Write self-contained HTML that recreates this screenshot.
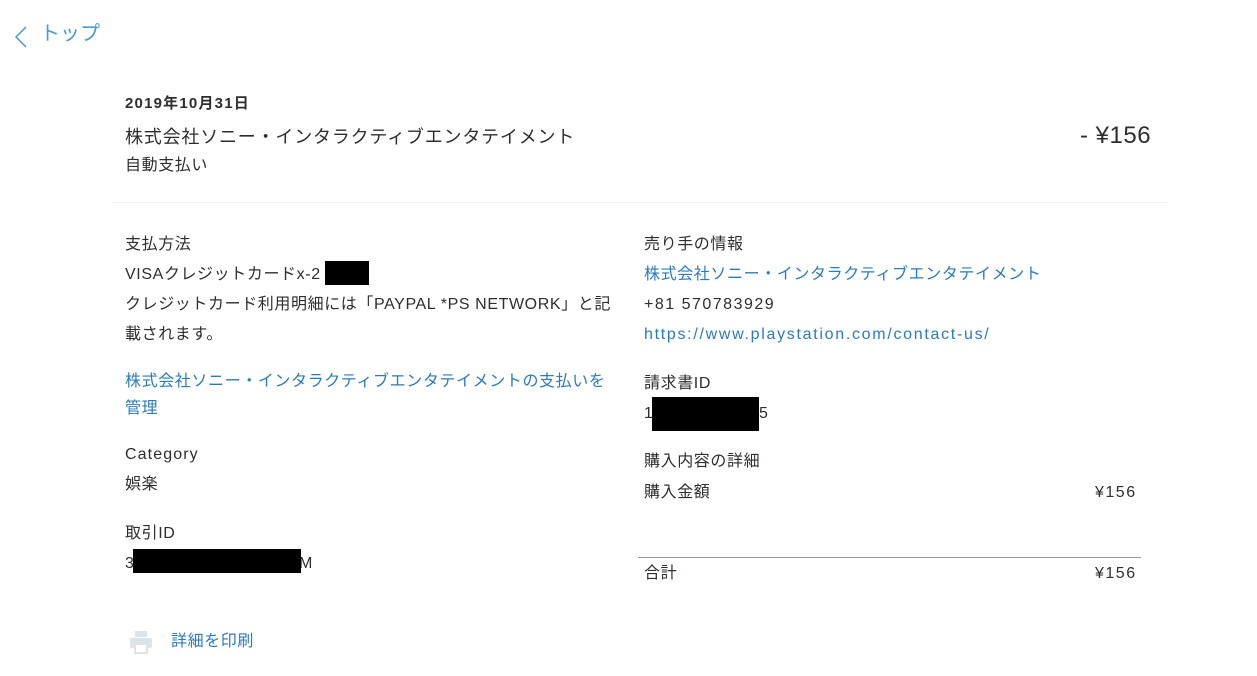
<!DOCTYPE html><html><head><meta charset="utf-8"><style>
body{margin:0;width:1257px;height:676px;background:#fff;font-family:"Liberation Sans","Noto Sans CJK JP",sans-serif;color:#2c2e2f;position:relative;overflow:hidden}
.a{position:absolute;white-space:nowrap;font-size:16px;line-height:20px;letter-spacing:.6px}
.l{letter-spacing:1.5px}
.b{color:#2a7bbd}
.k{position:absolute;background:#000}
</style></head><body>
<svg class="a" style="left:11px;top:24px" width="22" height="26" viewBox="0 0 22 26"><path d="M15 3 L5 13 L15 23" fill="none" stroke="#4a9ad6" stroke-width="1.5"/></svg>
<div class="a b" style="left:40px;top:22px;font-size:20px;line-height:24px;color:#4a9ad6;letter-spacing:0">トップ</div>
<div class="a" style="left:125px;top:94px;font-weight:bold;font-size:15px;letter-spacing:1.2px">2019年10月31日</div>
<div class="a" style="left:125px;top:125px;font-size:18px;line-height:24px;letter-spacing:.8px">株式会社ソニー・インタラクティブエンタテイメント</div>
<div class="a" style="left:1080px;top:122px;font-size:24px;line-height:28px;letter-spacing:.5px">- ¥156</div>
<div class="a" style="left:125px;top:156px">自動支払い</div>
<div style="position:absolute;left:112px;top:202px;width:1055px;height:1px;background:#eef0f2"></div>
<div class="a" style="left:125px;top:235px">支払方法</div>
<div class="a" style="left:125px;top:265px">VISAクレジットカードx-2</div>
<div class="k" style="left:325px;top:261px;width:44px;height:24px"></div>
<div class="a" style="left:125px;top:295px">クレジットカード利用明細には「PAYPAL *PS NETWORK」と記</div>
<div class="a" style="left:125px;top:325px">載されます。</div>
<div class="a b" style="left:125px;top:372px">株式会社ソニー・インタラクティブエンタテイメントの支払いを</div>
<div class="a b" style="left:125px;top:399px">管理</div>
<div class="a l" style="left:125px;top:445px;letter-spacing:1.1px">Category</div>
<div class="a" style="left:125px;top:475px">娯楽</div>
<div class="a" style="left:125px;top:524px">取引ID</div>
<div class="a" style="left:125px;top:554px">3</div>
<div class="a" style="left:299px;top:554px">M</div>
<div class="k" style="left:133px;top:549px;width:168px;height:24px"></div>
<svg class="a" style="left:129px;top:630px" width="24" height="24" viewBox="0 0 24 24"><rect x="6" y="1" width="12" height="6" fill="#dde3e8"/><rect x="1" y="8" width="22" height="10" rx="2" fill="#dde3e8"/><rect x="6" y="14" width="12" height="9" fill="#fff" stroke="#dde3e8" stroke-width="2"/></svg>
<div class="a b" style="left:171px;top:632px">詳細を印刷</div>
<div class="a" style="left:644px;top:235px">売り手の情報</div>
<div class="a b" style="left:644px;top:265px">株式会社ソニー・インタラクティブエンタテイメント</div>
<div class="a l" style="left:644px;top:295px">+81 570783929</div>
<div class="a b" style="left:644px;top:325px;letter-spacing:1.7px">https://www.playstation.com/contact-us/</div>
<div class="a" style="left:644px;top:374px">請求書ID</div>
<div class="a" style="left:644px;top:404px">1</div>
<div class="a" style="left:759px;top:404px">5</div>
<div class="k" style="left:652px;top:397px;width:107px;height:34px"></div>
<div class="a" style="left:644px;top:452px">購入内容の詳細</div>
<div class="a" style="left:644px;top:483px">購入金額</div>
<div class="a l" style="left:1095px;top:483px">¥156</div>
<div style="position:absolute;left:638px;top:557px;width:503px;height:1px;background:#9a9a9a"></div>
<div class="a" style="left:644px;top:564px">合計</div>
<div class="a l" style="left:1095px;top:564px">¥156</div>
</body></html>
